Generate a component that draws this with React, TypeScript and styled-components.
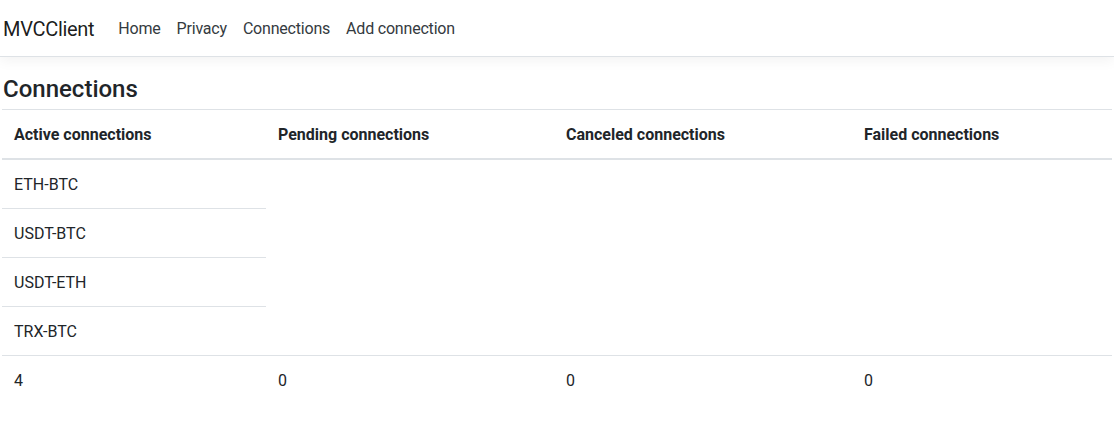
import React from "react";
import styled, { createGlobalStyle } from "styled-components";

const GlobalStyle = createGlobalStyle`
  html, body { margin: 0; padding: 0; background: #fff; }
  body {
    font-family: Roboto, "Liberation Sans", sans-serif;
    font-size: 16px;
    line-height: 1.5;
    color: #212529;
  }
  * { box-sizing: border-box; }
`;

const NavBar = styled.header`
  height: 57px;
  border-bottom: 1px solid #dee2e6;
  box-shadow: 0 4px 12px rgba(0, 0, 0, 0.05);
  background: #fff;
  margin-bottom: 16px;
`;

const NavInner = styled.nav`
  display: flex;
  align-items: center;
  padding: 9px 2px 7px;
  height: 56px;
`;

const Brand = styled.a`
  font-size: 20px;
  line-height: 30px;
  padding: 5px 0 5px 1px;
  margin-right: 16px;
  letter-spacing: -0.3px;
  color: rgba(0, 0, 0, 0.9);
  text-decoration: none;
`;

const NavList = styled.ul`
  display: flex;
  list-style: none;
  margin: 0;
  padding: 0;
`;

const NavLink = styled.a`
  display: block;
  padding: 8px;
  line-height: 24px;
  letter-spacing: -0.2px;
  color: #343a40;
  text-decoration: none;
`;

const Main = styled.main`
  padding: 0 2px;
`;

const Title = styled.h4`
  font-size: 24px;
  font-weight: 500;
  line-height: 29px;
  height: 29px;
  padding: 2px 0 0 1px;
  margin: 0 0 7px;
`;

const Table = styled.table`
  width: 1110px;
  border-collapse: collapse;
  table-layout: fixed;
`;

const HeadCell = styled.th<{ $w: number }>`
  width: ${(p) => p.$w}px;
  text-align: left;
  font-weight: 700;
  padding: 13px 12px 11px;
  line-height: 24px;
  border-top: 1px solid #dee2e6;
  border-bottom: 2px solid #dee2e6;
  vertical-align: bottom;
`;

const Cell = styled.td<{ $flush?: boolean }>`
  padding: ${(p) => (p.$flush ? "0" : "13px 12px 11px")};
  line-height: 24px;
  vertical-align: top;
`;

const TotalCell = styled(Cell)`
  border-top: 1px solid #dee2e6;
`;

const InnerTable = styled.table`
  width: 100%;
  border-collapse: collapse;
`;

const InnerCell = styled.td`
  padding: 13px 12px 11px;
  line-height: 24px;
`;

const InnerRow = styled.tr`
  & + & > td {
    border-top: 1px solid #dee2e6;
  }
`;

const columns = [
  { title: "Active connections", w: 264 },
  { title: "Pending connections", w: 288 },
  { title: "Canceled connections", w: 298 },
  { title: "Failed connections", w: 260 },
];

const active = ["ETH-BTC", "USDT-BTC", "USDT-ETH", "TRX-BTC"];

export default function App() {
  return (
    <>
      <GlobalStyle />
      <NavBar>
        <NavInner>
          <Brand href="#">MVCClient</Brand>
          <NavList>
            {["Home", "Privacy", "Connections", "Add connection"].map((l) => (
              <li key={l}>
                <NavLink href="#">{l}</NavLink>
              </li>
            ))}
          </NavList>
        </NavInner>
      </NavBar>
      <Main>
        <Title>Connections</Title>
        <Table>
          <thead>
            <tr>
              {columns.map((c) => (
                <HeadCell key={c.title} $w={c.w}>
                  {c.title}
                </HeadCell>
              ))}
            </tr>
          </thead>
          <tbody>
            <tr>
              <Cell $flush>
                <InnerTable>
                  <tbody>
                    {active.map((a) => (
                      <InnerRow key={a}>
                        <InnerCell>{a}</InnerCell>
                      </InnerRow>
                    ))}
                  </tbody>
                </InnerTable>
              </Cell>
              <Cell $flush />
              <Cell $flush />
              <Cell $flush />
            </tr>
            <tr>
              <TotalCell>{active.length}</TotalCell>
              <TotalCell>0</TotalCell>
              <TotalCell>0</TotalCell>
              <TotalCell>0</TotalCell>
            </tr>
          </tbody>
        </Table>
      </Main>
    </>
  );
}
